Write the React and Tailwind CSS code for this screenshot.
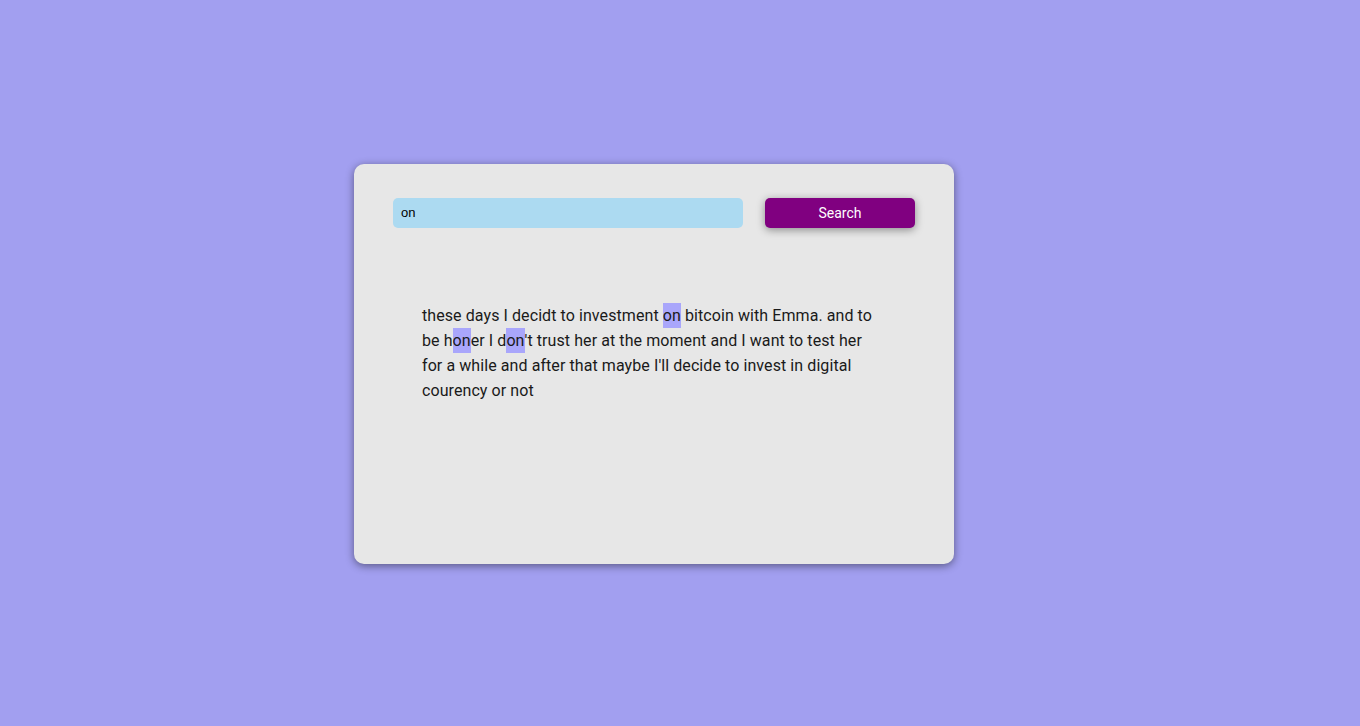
export default function App() {
  const text = "these days I decidt to investment on bitcoin with Emma. and to be honer I don't trust her at the moment and I want to test her for a while and after that maybe I'll decide to invest in digital courency or not";
  const parts = text.split("on");
  const out = [];
  parts.forEach((p, i) => {
    out.push(<span key={"t" + i}>{p}</span>);
    if (i < parts.length - 1) {
      out.push(
        <span key={"m" + i} className="inline-block bg-[#a9a6fb] leading-[25px]">on</span>
      );
    }
  });
  return (
    <div className="min-h-[726px] w-full bg-[#a29ff0] flex items-center justify-center pr-[52px] pt-[2px]" style={{ fontFamily: "Roboto, 'Liberation Sans', sans-serif" }}>
      <div className="w-[600px] h-[400px] shrink-0 bg-[#e7e7e7] rounded-[10px] shadow-[0_2px_8px_rgba(0,0,0,0.45)] flex flex-col items-start pt-[34px] pl-[39px]">
        <div className="flex items-center gap-[22px]">
          <div className="w-[350px] h-[30px] bg-[#acdaf1] rounded-[5px] flex items-center px-[8px] text-[13px] text-black" style={{ fontFamily: "'Liberation Sans', Arial, sans-serif" }}>on</div>
          <button className="w-[150px] h-[30px] bg-[#800080] rounded-[5px] text-white text-[14px] shadow-[0_2px_8px_rgba(0,0,0,0.4)]">Search</button>
        </div>
        <p className="mt-[75px] ml-[29px] w-[460px] text-[16px] leading-[25px] tracking-[0.08px] text-[#1a1a1a]">
          {out}
        </p>
      </div>
    </div>
  );
}
